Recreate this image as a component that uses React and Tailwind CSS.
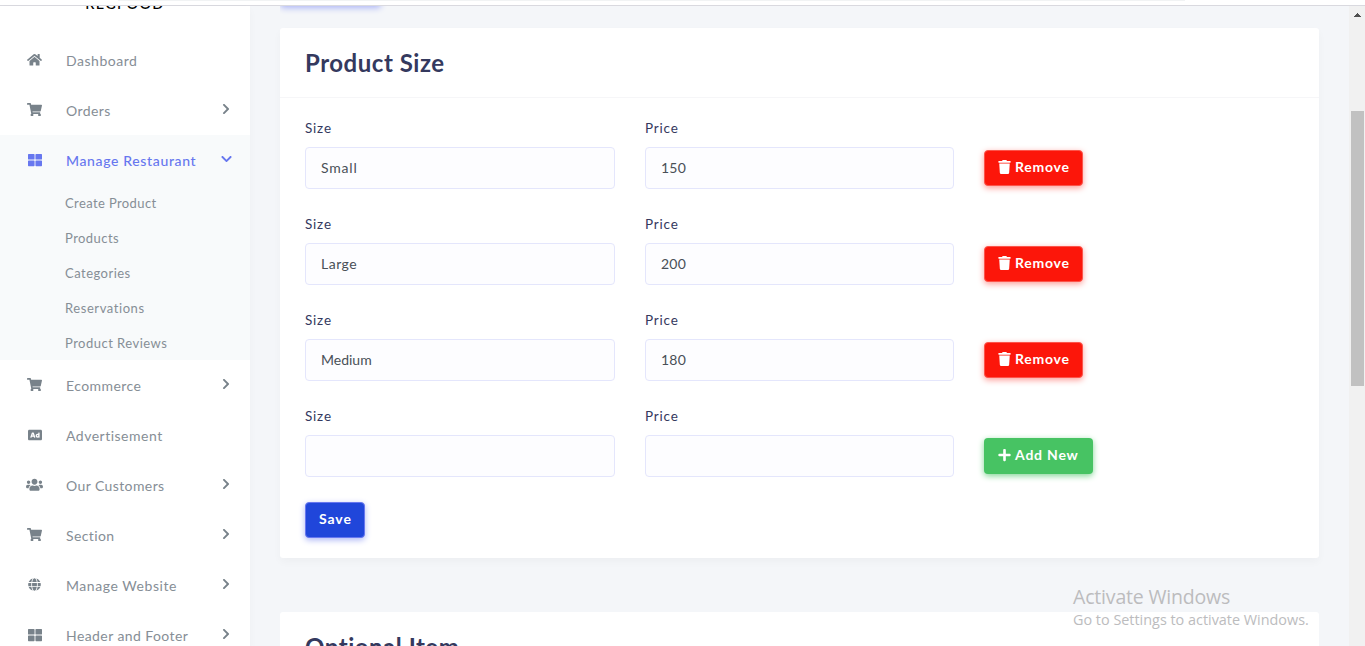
import { FaHome, FaShoppingCart, FaThLarge, FaAd, FaUsers, FaGlobe, FaTrash, FaPlus, FaChevronRight, FaChevronDown } from "react-icons/fa";

const topItems = [
  { label: "Dashboard", icon: FaHome, iconSize: "w-[15px] h-[13.5px]", tracking: "tracking-[0.52px]" },
  { label: "Orders", icon: FaShoppingCart, iconSize: "w-[15px] h-[13.5px]", arrow: true, tracking: "tracking-[0.4px]" },
];

const subItems = [
  { label: "Create Product", tracking: "tracking-[0.39px]" },
  { label: "Products", tracking: "tracking-[0.45px]" },
  { label: "Categories", tracking: "tracking-[0.48px]" },
  { label: "Reservations", tracking: "tracking-[0.57px]" },
  { label: "Product Reviews", tracking: "tracking-[0.48px]" },
];

const bottomItems = [
  { label: "Ecommerce", icon: FaShoppingCart, iconSize: "w-[15px] h-[13.5px]", arrow: true, tracking: "tracking-[0.42px]" },
  { label: "Advertisement", icon: FaAd, iconSize: "w-[14px] h-[14px]", tracking: "tracking-[0.5px]" },
  { label: "Our Customers", icon: FaUsers, iconSize: "w-[17px] h-[13.5px]", arrow: true, tracking: "tracking-[0.4px]" },
  { label: "Section", icon: FaShoppingCart, iconSize: "w-[15px] h-[13.5px]", arrow: true, tracking: "tracking-[0.4px]" },
  { label: "Manage Website", icon: FaGlobe, iconSize: "w-[13px] h-[13px]", arrow: true, tracking: "tracking-[0.55px]" },
  { label: "Header and Footer", icon: FaThLarge, iconSize: "w-[14px] h-[14px]", arrow: true, tracking: "tracking-[0.42px]" },
];

const sizes = [
  { size: "Small", price: "150" },
  { size: "Large", price: "200" },
  { size: "Medium", price: "180" },
  { size: "", price: "" },
];

const valueTracking = {
  Small: "tracking-[0.8px]",
  Large: "tracking-[0.5px]",
  150: "tracking-[0.2px]",
  200: "tracking-[0.2px]",
  180: "tracking-[0.2px]",
};

function NavItem({ label, icon: Icon, iconSize, arrow, active, tracking }) {
  const Arrow = active ? FaChevronDown : FaChevronRight;
  return (
    <a className={`flex h-[50px] shrink-0 items-center pl-[19.5px] pr-[18px] text-sm ${active ? "text-[#6777ef]" : "text-[#868e96]"}`}>
      <span className={`-mt-px flex w-[30px] justify-center ${active ? "" : "text-[#78828a]"}`}>
        <Icon className={`shrink-0 ${iconSize}`} />
      </span>
      <span className={`ml-[16.5px] flex-1 whitespace-nowrap pt-0.5 ${active ? "font-medium" : ""} ${tracking}`}>{label}</span>
      {arrow && (
        <span className="-mt-0.5 flex w-3 justify-center">
          <Arrow className={active ? "h-3 w-[11px]" : "h-3 w-3 text-[#78828a]"} />
        </span>
      )}
    </a>
  );
}

function Sidebar() {
  return (
    <aside className="flex w-[250px] shrink-0 flex-col overflow-hidden bg-white shadow-[0_4px_8px_rgba(0,0,0,0.03)]">
      <div className="flex h-[29px] shrink-0 items-start justify-center overflow-hidden">
        <span className="-mt-[10px] text-[14.5px] font-medium leading-[15px] tracking-[1.3px] text-black">REGFOOD</span>
      </div>
      {topItems.map((item) => <NavItem key={item.label} {...item} />)}
      <div className="shrink-0 bg-[#f8fafb]">
        <NavItem label="Manage Restaurant" icon={FaThLarge} iconSize="w-[14px] h-[14px]" arrow active tracking="tracking-[0.64px]" />
        {subItems.map((item) => (
          <a key={item.label} className={`flex h-[35px] items-center pl-[65px] pt-0.5 text-[13px] text-[#868e96] ${item.tracking}`}>{item.label}</a>
        ))}
      </div>
      {bottomItems.map((item) => <NavItem key={item.label} {...item} />)}
    </aside>
  );
}

function Field({ label, value, width }) {
  return (
    <label className={`flex flex-col ${width}`}>
      <span className="flex h-[29px] items-start pt-px text-[13.5px] leading-[19px] tracking-[0.8px] text-[#34395e]">{label}</span>
      <input readOnly value={value} className={`h-[42px] w-full rounded-[4px] border border-[#e4e6fc] bg-[#fdfdff] px-[15px] pb-0.5 text-sm text-[#495057] outline-none ${valueTracking[value] ?? ""}`} />
    </label>
  );
}

function SizeRow({ size, price }) {
  const filled = size !== "";
  return (
    <div className="flex h-24 gap-[30px]">
      <Field label="Size" value={size} width="w-[310px]" />
      <Field label="Price" value={price} width="w-[309px]" />
      {filled ? (
        <button className="mt-8 flex h-9 w-[99px] items-center gap-1 rounded-[4px] border border-[#fc544b] bg-[#fc160a] pb-0.5 pl-[13px] text-sm font-bold tracking-[0.75px] text-white shadow-[0_2px_6px_#fd9b96]">
          <FaTrash className="h-[14px] w-[13px]" />Remove
        </button>
      ) : (
        <button className="mt-8 flex h-9 w-[109px] items-center gap-1 rounded-[4px] bg-[#47c363] pb-0.5 pl-[14px] text-sm font-bold tracking-[0.8px] text-white shadow-[0_2px_6px_#81d694]">
          <FaPlus className="h-[14px] w-[13px]" />Add New
        </button>
      )}
    </div>
  );
}

function CardHeader({ children }) {
  return (
    <header className="flex h-[70px] items-center border-b border-[#f6f6f8] px-[25px] pt-px">
      <h4 className="text-2xl font-bold leading-7 tracking-[0.52px] text-[#34395e]">{children}</h4>
    </header>
  );
}

function ScrollBar() {
  return (
    <div className="flex w-4 shrink-0 flex-col items-center bg-[#f1f1f1]">
      <svg viewBox="0 0 7 4" className="ml-px mt-[7px] h-1 w-[7px] shrink-0" shapeRendering="crispEdges"><path d="M3 0h1v1h1v1h1v1h1v1H0V3h1V2h1V1h1z" fill="#505050" /></svg>
      <div className="ml-px mt-[94px] h-[275px] w-[13px] shrink-0 bg-[#c1c1c1]" />
    </div>
  );
}

export default function App() {
  return (
    <div className="relative flex h-[646px] w-[1365px] flex-col overflow-hidden bg-[#f4f6f9] font-['Lato','Noto_Sans',sans-serif]">
      <div className="h-1.5 shrink-0 border-b border-[#d9d9df] bg-white">
        <div className="ml-[118px] h-px w-[1067px] bg-[#f1f3f4]" />
      </div>
      <div className="flex min-h-0 flex-1">
        <Sidebar />
        <main className="flex min-w-0 flex-1 flex-col overflow-hidden pl-[30px] pr-[30px]">
          <div className="h-[22px] shrink-0 overflow-hidden">
            <div className="-mt-9 h-9 w-[101px] rounded-[4px] bg-[#6777ef] shadow-[0_2px_6px_#acb5f6]" />
          </div>
          <section className="h-[530px] shrink-0 rounded-[3px] bg-white shadow-[0_4px_8px_rgba(0,0,0,0.03)]">
            <CardHeader>Product Size</CardHeader>
            <div className="px-[25px] py-5">
              {sizes.map((row, index) => <SizeRow key={index} {...row} />)}
              <button className="flex h-9 w-[60px] items-center rounded-[4px] border border-[#6777ef] bg-[#2046da] pb-0.5 pl-[13px] text-sm font-bold tracking-[0.9px] text-white shadow-[0_2px_6px_#acb5f6]">Save</button>
            </div>
          </section>
          <section className="mt-[54px] h-[200px] shrink-0 rounded-[3px] bg-white">
            <CardHeader>Optional Item</CardHeader>
          </section>
        </main>
        <ScrollBar />
      </div>
      <div className="pointer-events-none absolute left-[1073px] top-[585px] whitespace-nowrap font-['Open_Sans',sans-serif] text-[#bcbcbe]">
        <div className="text-[19.5px] leading-6 tracking-[-0.18px]">Activate Windows</div>
        <div className="text-[14.4px] leading-[22px]">Go to Settings to activate Windows.</div>
      </div>
    </div>
  );
}
